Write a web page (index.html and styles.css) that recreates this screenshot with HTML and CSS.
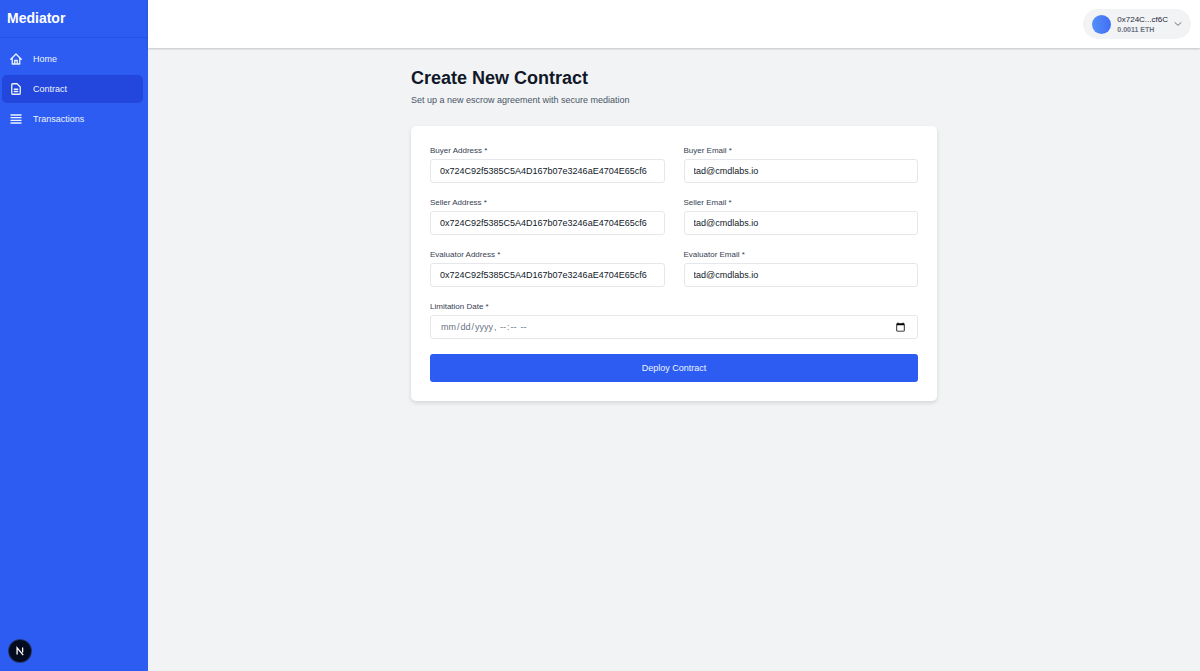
FILE: index.html
```html
<!DOCTYPE html>
<html lang="en">
<head>
    <meta charset="UTF-8">
    <meta name="viewport" content="width=device-width, initial-scale=1.0">
    <title>Mediator</title>
    <link rel="stylesheet" href="styles.css">
</head>
<body>
    <aside class="sidebar">
        <div class="brand">Mediator</div>
        <nav class="nav">
            <a class="nav-link" href="#">
                <svg class="nav-icon" viewBox="0 0 24 24" fill="none" stroke="currentColor" stroke-width="2.6" stroke-linecap="round" stroke-linejoin="round"><path d="M1.500 12.500L12 2l10.500 10.500M4.500 10v12h15V10M9.500 22v-7h5v7"/></svg>
                Home
            </a>
            <a class="nav-link active" href="#">
                <svg class="nav-icon" viewBox="0 0 24 24" fill="none" stroke="currentColor" stroke-width="2.6" stroke-linecap="round" stroke-linejoin="round"><path d="M8.500 12.500h7M8.500 17h7M18.500 22.500h-13a2 2 0 0 1-2-2v-17a2 2 0 0 1 2-2H14l6.500 6.500v12.500a2 2 0 0 1-2 2z"/></svg>
                Contract
            </a>
            <a class="nav-link" href="#">
                <svg class="nav-icon" viewBox="0 0 24 24" fill="none" stroke="currentColor" stroke-width="2.6"><path d="M1 4h22M1 9.300h22M1 14.600h22M1 20h22"/></svg>
                Transactions
            </a>
        </nav>
    </aside>

    <div class="page">
        <header class="topbar">
            <button class="wallet" type="button">
                <span class="avatar"></span>
                <span class="wallet-info">
                    <span class="wallet-address">0x724C...cf6C</span>
                    <span class="wallet-balance">0.0011 ETH</span>
                </span>
                <svg class="chevron" viewBox="0 0 24 24" fill="none" stroke="currentColor" stroke-width="3" stroke-linecap="round" stroke-linejoin="round"><path d="M3 8l9 8 9-8"/></svg>
            </button>
        </header>

        <main class="content">
            <h1>Create New Contract</h1>
            <p class="subtitle">Set up a new escrow agreement with secure mediation</p>

            <form class="card">
                <div class="fields">
                    <div class="field">
                        <label for="buyerAddress">Buyer Address *</label>
                        <input type="text" id="buyerAddress" value="0x724C92f5385C5A4D167b07e3246aE4704E65cf6">
                    </div>
                    <div class="field">
                        <label for="buyerEmail">Buyer Email *</label>
                        <input type="email" id="buyerEmail" value="tad@cmdlabs.io">
                    </div>
                    <div class="field">
                        <label for="sellerAddress">Seller Address *</label>
                        <input type="text" id="sellerAddress" value="0x724C92f5385C5A4D167b07e3246aE4704E65cf6">
                    </div>
                    <div class="field">
                        <label for="sellerEmail">Seller Email *</label>
                        <input type="email" id="sellerEmail" value="tad@cmdlabs.io">
                    </div>
                    <div class="field">
                        <label for="evaluatorAddress">Evaluator Address *</label>
                        <input type="text" id="evaluatorAddress" value="0x724C92f5385C5A4D167b07e3246aE4704E65cf6">
                    </div>
                    <div class="field">
                        <label for="evaluatorEmail">Evaluator Email *</label>
                        <input type="email" id="evaluatorEmail" value="tad@cmdlabs.io">
                    </div>
                    <div class="field wide">
                        <label for="limitDate">Limitation Date *</label>
                        <input type="datetime-local" id="limitDate">
                    </div>
                </div>
                <button class="deploy" type="submit">Deploy Contract</button>
            </form>
        </main>
    </div>

    <button class="dev-badge" type="button" aria-label="Dev tools">
        <svg viewBox="0 0 24 24" fill="none" stroke="#fff" stroke-width="2.2"><path d="M7 18V6.500l10.500 12.500M16.500 6v8.500"/></svg>
    </button>
</body>
</html>
```

FILE: styles.css
```css
* {
    margin: 0;
    padding: 0;
    box-sizing: border-box;
}

body {
    display: flex;
    min-height: 100vh;
    font-family: "Liberation Sans", Arial, sans-serif;
    font-size: 9px;
    color: #101828;
    background: #f2f3f5;
}

button, input {
    font: inherit;
    color: inherit;
}

button {
    border: none;
    cursor: pointer;
}

/* sidebar */
.sidebar {
    width: 148px;
    flex-shrink: 0;
    background: #2c5cf2;
    color: #fff;
}

.brand {
    padding: 10px 7px 11px;
    font-size: 14px;
    line-height: 16px;
    font-weight: bold;
    border-bottom: 1px solid #2752e6;
}

.nav {
    display: flex;
    flex-direction: column;
    gap: 2px;
    padding: 7px 5px 7px 2px;
}

.nav-link {
    display: flex;
    align-items: center;
    gap: 11px;
    height: 28px;
    padding: 0 8px;
    border-radius: 5px;
    color: #edf4ff;
    text-decoration: none;
}

.nav-link.active {
    background: #2346dc;
}

.nav-icon {
    width: 12px;
    height: 12px;
}

/* top bar */
.page {
    flex: 1;
    min-width: 0;
}

.topbar {
    display: flex;
    justify-content: flex-end;
    padding: 9px;
    background: #fff;
    box-shadow: 0 1px 2px rgba(0, 0, 0, 0.2);
}

.wallet {
    display: flex;
    align-items: center;
    gap: 6px;
    height: 30px;
    padding: 0 9px;
    border-radius: 15px;
    background: #f2f3f5;
    text-align: left;
}

.avatar {
    width: 19px;
    height: 19px;
    border-radius: 50%;
    background: linear-gradient(90deg, #5590f8, #416ef5);
}

.wallet-info {
    display: flex;
    flex-direction: column;
}

.wallet-address {
    font-size: 8px;
    line-height: 11px;
    color: #1e2939;
}

.wallet-balance {
    font-size: 7px;
    line-height: 9px;
    font-weight: bold;
    color: #6a7282;
}

.chevron {
    width: 8px;
    height: 8px;
    color: #6a7282;
}

/* form */
.content {
    max-width: 526px;
    margin: 0 auto;
    padding: 18px 0;
}

h1 {
    font-size: 18px;
    line-height: 24px;
}

.subtitle {
    margin: 3px 0 19px;
    line-height: 14px;
    color: #4a5565;
}

.card {
    padding: 19px;
    border-radius: 5px;
    background: #fff;
    box-shadow: 0 2px 4px rgba(0, 0, 0, 0.12);
}

.fields {
    display: grid;
    grid-template-columns: 1fr 1fr;
    gap: 14px 19px;
}

.field {
    display: flex;
    flex-direction: column;
    gap: 2px;
    min-width: 0;
}

.wide {
    grid-column: span 2;
}

label {
    font-size: 8px;
    line-height: 12px;
    color: #364153;
}

.field input {
    width: 100%;
    height: 24px;
    padding: 0 9px;
    border: 1px solid #e5e7eb;
    border-radius: 3px;
    background: #fff;
}

.field input[type="datetime-local"] {
    color: #6a7282;
}

.field input::-webkit-calendar-picker-indicator {
    width: 11px;
    height: 11px;
}

.deploy {
    width: 100%;
    height: 28px;
    margin-top: 15px;
    border-radius: 3px;
    background: #2c5cf2;
    color: #edf4ff;
}

/* floating badge */
.dev-badge {
    position: fixed;
    left: 9px;
    bottom: 9px;
    width: 22px;
    height: 22px;
    border-radius: 50%;
    background: #050b1e;
    box-shadow: 0 0 0 1px #26376f;
}

.dev-badge svg {
    display: block;
    width: 14px;
    height: 14px;
    margin: auto;
}
```
